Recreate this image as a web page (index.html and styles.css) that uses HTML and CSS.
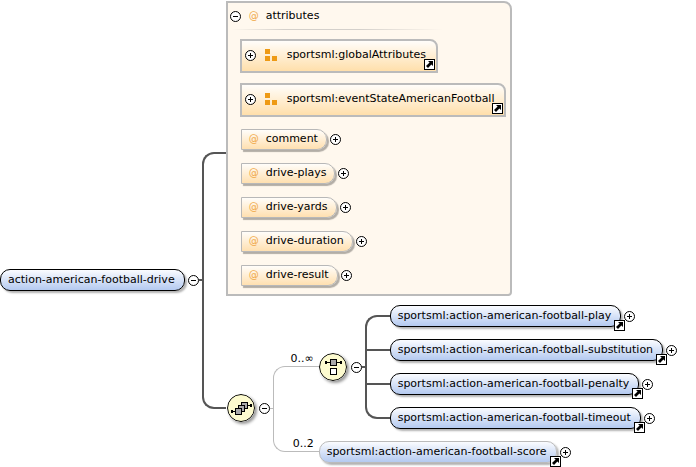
FILE: index.html
```
<!DOCTYPE html>
<html lang="en">
<head>
    <meta charset="UTF-8">
    <meta name="viewport" content="width=device-width, initial-scale=1.0">
    <title>action-american-football-drive</title>
    <link rel="stylesheet" href="styles.css">
</head>

<body>
    <!-- shared icons -->
    <svg class="icons">
        <symbol id="plus" viewBox="0 0 11 11">
            <circle cx="5.5" cy="5.5" r="5" fill="#fff" stroke="#000"/>
            <path d="M3 5.5h5M5.5 3v5" stroke="#000"/>
        </symbol>
        <symbol id="minus" viewBox="0 0 11 11">
            <circle cx="5.5" cy="5.5" r="5" fill="#fff" stroke="#000"/>
            <path d="M3 5.5h5" stroke="#000"/>
        </symbol>
        <symbol id="jump" viewBox="0 0 11 11">
            <rect x="0.5" y="0.5" width="10" height="10" fill="#fff" stroke="#000"/>
            <path d="M4 2h5v5L7.4 5.4 4 9 2 7 5.600 3.600z" fill="#000"/>
        </symbol>
        <symbol id="group" viewBox="0 0 12 12">
            <path d="M0 0h5v5H0zM0 7h5v5H0zM7 7h5v5H7z" fill="#ee9a14"/>
        </symbol>
    </svg>

    <main class="diagram">
        <div class="node root">
            <span class="element">action-american-football-drive</span>
            <button class="toggle" aria-label="Collapse"><svg><use href="#minus"/></svg></button>
            <span class="stub"></span>
        </div>
        <div class="trunk root-trunk"></div>

        <div class="children">
            <section class="attributes">
                <header>
                    <button class="toggle" aria-label="Collapse"><svg><use href="#minus"/></svg></button>
                    <span class="at">@</span>
                    <span>attributes</span>
                </header>
                <hr>
                <div class="group">
                    <button class="toggle" aria-label="Expand"><svg><use href="#plus"/></svg></button>
                    <svg class="group-icon"><use href="#group"/></svg>
                    <span>sportsml:globalAttributes</span>
                    <a class="jump" href="#" aria-label="Go to definition"><svg><use href="#jump"/></svg></a>
                </div>
                <div class="group">
                    <button class="toggle" aria-label="Expand"><svg><use href="#plus"/></svg></button>
                    <svg class="group-icon"><use href="#group"/></svg>
                    <span>sportsml:eventStateAmericanFootball</span>
                    <a class="jump" href="#" aria-label="Go to definition"><svg><use href="#jump"/></svg></a>
                </div>
                <div class="list">
                    <div class="node">
                        <span class="attribute"><span class="at">@</span>comment</span>
                        <button class="toggle" aria-label="Expand"><svg><use href="#plus"/></svg></button>
                    </div>
                    <div class="node">
                        <span class="attribute"><span class="at">@</span>drive-plays</span>
                        <button class="toggle" aria-label="Expand"><svg><use href="#plus"/></svg></button>
                    </div>
                    <div class="node">
                        <span class="attribute"><span class="at">@</span>drive-yards</span>
                        <button class="toggle" aria-label="Expand"><svg><use href="#plus"/></svg></button>
                    </div>
                    <div class="node">
                        <span class="attribute"><span class="at">@</span>drive-duration</span>
                        <button class="toggle" aria-label="Expand"><svg><use href="#plus"/></svg></button>
                    </div>
                    <div class="node">
                        <span class="attribute"><span class="at">@</span>drive-result</span>
                        <button class="toggle" aria-label="Expand"><svg><use href="#plus"/></svg></button>
                    </div>
                </div>
            </section>

            <section class="sequence">
                <div class="node compositor">
                    <svg class="circle" viewBox="0 0 28 28">
                        <circle cx="14" cy="14" r="13.5" fill="#fdfbcf" stroke="#000"/>
                        <path d="M5 17.5h4M20 11.5h5" stroke="#000"/>
                        <path d="M4 16h2v3H4zM23 10h2v3h-2z"/>
                        <g fill="#aaa" stroke="#000">
                            <rect x="14.5" y="8.5" width="6" height="6"/>
                            <rect x="11.5" y="11.5" width="6" height="6"/>
                            <rect x="8.5" y="14.5" width="6" height="6"/>
                        </g>
                    </svg>
                    <button class="toggle" aria-label="Collapse"><svg><use href="#minus"/></svg></button>
                    <span class="stub light"></span>
                </div>
                <div class="occurs">
                    <span>0..∞</span>
                    <div class="trunk light"><span>0..2</span></div>
                </div>
                <div class="list">
                    <div class="choice">
                        <div class="node compositor">
                            <svg class="circle" viewBox="0 0 28 28">
                                <circle cx="14" cy="14" r="13.5" fill="#fdfbcf" stroke="#000"/>
                                <path d="M6 9.5h17" stroke="#000"/>
                                <path d="M6 8h2v3H6zM21 8h2v3h-2z"/>
                                <rect x="11.5" y="6.5" width="6" height="6" fill="#aaa" stroke="#000"/>
                                <rect x="11.5" y="15.5" width="6" height="6" fill="#fff" stroke="#000"/>
                            </svg>
                            <button class="toggle" aria-label="Collapse"><svg><use href="#minus"/></svg></button>
                            <span class="stub"></span>
                        </div>
                        <div class="trunk choice-trunk"></div>
                        <div class="list">
                            <div class="node">
                                <span class="element">sportsml:action-american-football-play<a class="jump" href="#" aria-label="Go to definition"><svg><use href="#jump"/></svg></a></span>
                                <button class="toggle" aria-label="Expand"><svg><use href="#plus"/></svg></button>
                            </div>
                            <div class="node">
                                <span class="element">sportsml:action-american-football-substitution<a class="jump" href="#" aria-label="Go to definition"><svg><use href="#jump"/></svg></a></span>
                                <button class="toggle" aria-label="Expand"><svg><use href="#plus"/></svg></button>
                            </div>
                            <div class="node">
                                <span class="element">sportsml:action-american-football-penalty<a class="jump" href="#" aria-label="Go to definition"><svg><use href="#jump"/></svg></a></span>
                                <button class="toggle" aria-label="Expand"><svg><use href="#plus"/></svg></button>
                            </div>
                            <div class="node">
                                <span class="element">sportsml:action-american-football-timeout<a class="jump" href="#" aria-label="Go to definition"><svg><use href="#jump"/></svg></a></span>
                                <button class="toggle" aria-label="Expand"><svg><use href="#plus"/></svg></button>
                            </div>
                        </div>
                    </div>
                    <div class="node">
                        <span class="element optional">sportsml:action-american-football-score<a class="jump" href="#" aria-label="Go to definition"><svg><use href="#jump"/></svg></a></span>
                        <button class="toggle" aria-label="Expand"><svg><use href="#plus"/></svg></button>
                    </div>
                </div>
            </section>
        </div>
    </main>
</body>
</html>
```
FILE: styles.css
```
* {
    box-sizing: border-box;
}

body {
    margin: 0;
    background-color: #fff;
    color: #000;
    font-family: "DejaVu Sans", Verdana, sans-serif;
    font-size: 11px;
    line-height: 14px;
    white-space: nowrap;
}

svg {
    display: block;
}

.icons {
    position: absolute;
    width: 0;
    height: 0;
}

.diagram {
    display: flex;
    align-items: flex-start;
}

.node {
    display: flex;
    align-items: center;
}

.list {
    display: flex;
    flex-direction: column;
    gap: 13px;
}

/* buttons and links */
.toggle {
    width: 11px;
    height: 11px;
    margin: 0 0 0 3px;
    padding: 0;
    border: none;
    background: none;
    cursor: pointer;
}

.toggle svg,
.jump svg {
    width: 11px;
    height: 11px;
}

.jump {
    position: absolute;
}

/* boxes */
.element {
    position: relative;
    height: 22px;
    padding: 3px 9px 0 7px;
    border: 1px solid #000;
    border-radius: 10px;
    background: linear-gradient(#fafcff, #b4caf0);
    box-shadow: 2px 2px 2px rgba(0, 0, 0, 0.3);
}

.element.optional {
    border-color: #bbb;
}

.element .jump {
    right: -5px;
    bottom: -5px;
}

.node + .node .element,
.choice + .node .element {
    margin-top: -1px;
}

.attribute {
    display: flex;
    height: 21px;
    padding: 2px 8px 0 7px;
    border: 1px solid #b8b8b8;
    border-radius: 0 10px 10px 0;
    background: linear-gradient(#fffdfa, #ffe0b0);
    box-shadow: 2px 2px 1px rgba(0, 0, 0, 0.3);
}

.at {
    width: 17px;
    color: #f0a848;
    font-size: 10px;
}

/* connecting lines */
.stub {
    width: 3px;
    height: 2px;
    background-color: #555;
}

.trunk {
    width: 25px;
    border: 2px solid #555;
    border-right: none;
    border-radius: 12px 0 0 12px;
}

.stub.light {
    height: 1px;
    background-color: #bbb;
}

.trunk.light {
    display: flex;
    justify-content: flex-end;
    align-items: flex-end;
    width: 46px;
    height: 86px;
    padding-right: 5px;
    border-width: 1px;
    border-color: #bbb;
}

.root {
    margin-top: 269px;
}

.root-trunk {
    width: 24px;
    height: 257px;
    margin-top: 152px;
}

.choice-trunk {
    height: 104px;
    padding-top: 32px;
}

.choice-trunk::before {
    content: "";
    display: block;
    height: 32px;
    border: solid #555;
    border-width: 2px 0;
}

/* attributes panel */
.attributes {
    width: max-content;
    margin-top: 1px;
    padding: 5px 4px 8px 12px;
    border: 2px solid #bbb;
    border-radius: 0 8px 4px 0;
    background-color: #fff8ee;
}

.attributes header {
    display: flex;
    align-items: center;
    height: 16px;
    margin-left: -13px;
}

.attributes header .at {
    margin-left: 8px;
}

.attributes hr {
    width: 212px;
    height: 1px;
    margin: 5px 0 9px -9px;
    border: none;
    background: linear-gradient(to right, #fff8ee, #d4d0cb 25%, #d4d0cb 60%, #fff8ee);
}

.attributes .list {
    margin: 12px 0 0 1px;
}

.group {
    position: relative;
    display: flex;
    align-items: center;
    width: max-content;
    height: 34px;
    margin-bottom: 10px;
    padding: 0 10px 2px 0;
    border: 2px solid #bbb;
    border-radius: 0 8px 0 0;
    background: linear-gradient(#fffdfa, #ffdfab);
}

.group-icon {
    width: 12px;
    height: 12px;
    margin: 0 10px 0 9px;
}

.group .jump {
    right: 1px;
    bottom: 1px;
}

/* sequence and choice */
.sequence {
    display: flex;
    align-items: flex-start;
    margin: 9px 0 0 1px;
    padding-bottom: 4px;
}

.sequence > .compositor {
    margin-top: 89px;
}

.compositor .toggle {
    margin-left: 4px;
}

.circle {
    width: 28px;
    height: 28px;
    border-radius: 50%;
    box-shadow: 2px 2px 3px rgba(0, 0, 0, 0.4);
}

.occurs {
    display: flex;
    flex-direction: column;
    margin-top: 47px;
}

.occurs > span {
    padding-right: 5px;
    text-align: right;
}

.choice {
    display: flex;
    align-items: center;
}
```
